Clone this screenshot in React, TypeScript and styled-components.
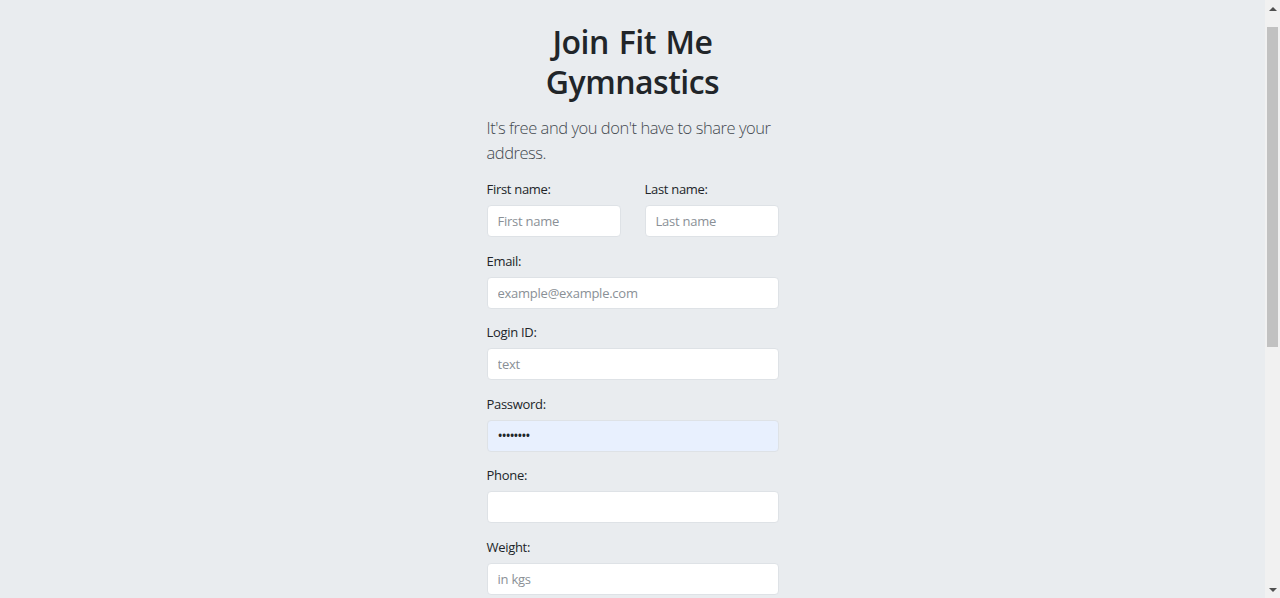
import React from 'react';
import styled, { createGlobalStyle } from 'styled-components';

const GlobalStyle = createGlobalStyle`
  * { box-sizing: border-box; }
  body {
    margin: 0;
    background: #e9ecef;
    color: #212529;
    font-family: "Open Sans", "Noto Sans", sans-serif;
  }
`;

const Page = styled.div`
  display: flex;
  justify-content: center;
  padding: 22px 15px 60px 0;
`;

const FormWrap = styled.form`
  width: 292px;
  display: flex;
  flex-direction: column;
`;

const Title = styled.h1`
  margin: 0 0 13px;
  font-size: 32px;
  line-height: 40px;
  font-weight: 600;
  text-align: center;
  letter-spacing: -0.5px;
  word-spacing: 2px;
`;

const Lead = styled.p`
  margin: 0 0 14px;
  font-size: 16.5px;
  line-height: 25px;
  font-weight: 300;
  letter-spacing: -0.45px;
  color: #444a50;
`;

const Row = styled.div`
  display: grid;
  grid-template-columns: minmax(0, 1fr) minmax(0, 1fr);
  column-gap: 24px;
`;

const Group = styled.div`
  display: flex;
  flex-direction: column;
  min-width: 0;
  margin-bottom: 13.5px;
`;

const Label = styled.label`
  font-size: 13px;
  line-height: 21px;
  letter-spacing: -0.3px;
  margin-bottom: 5px;
  color: #212529;
`;

const Input = styled.input<{ $filled?: boolean }>`
  width: 100%;
  min-width: 0;
  height: 32px;
  padding: 0 10px;
  font-family: inherit;
  font-size: 13px;
  letter-spacing: -0.25px;
  color: #212529;
  background: ${(p) => (p.$filled ? '#e8f0fe' : '#fff')};
  border: 1px solid #dee2e6;
  border-radius: 4px;
  outline: none;
  &[type='password'] {
    font-size: 14px;
    letter-spacing: -1.3px;
  }
  &::placeholder {
    color: #8a9096;
  }
`;

const Select = styled.select`
  height: 32px;
  padding: 0 10px;
  font-family: inherit;
  font-size: 13px;
  background: #fff;
  border: 1px solid #dee2e6;
  border-radius: 4px;
`;

const Submit = styled.button`
  margin-top: 8px;
  height: 38px;
  font-family: inherit;
  font-size: 15px;
  color: #fff;
  background: #0d6efd;
  border: none;
  border-radius: 4px;
`;

/* browser scrollbar, drawn because the headless page hides the native one */
const ScrollBar = styled.div`
  position: fixed;
  top: 0;
  right: 0;
  width: 15px;
  height: 100vh;
  background: #f1f1f1;
  display: flex;
  flex-direction: column;
  align-items: center;
`;

const Arrow = styled.div<{ $down?: boolean }>`
  height: 17px;
  width: 100%;
  display: flex;
  align-items: center;
  justify-content: center;
  &::before {
    content: '';
    border-left: 4px solid transparent;
    border-right: 4px solid transparent;
    ${(p) => (p.$down ? 'border-top: 4px solid #505050;' : 'border-bottom: 4px solid #505050;')}
  }
`;

const Thumb = styled.div`
  width: 11px;
  height: 320px;
  margin-top: 10px;
  background: #c1c1c1;
`;

const Track = styled.div`
  flex: 1;
  width: 100%;
  display: flex;
  justify-content: center;
`;

type Field = { label: string; placeholder?: string; type?: string; value?: string };

const fields: Field[] = [
  { label: 'Email:', placeholder: 'example@example.com', type: 'email' },
  { label: 'Login ID:', placeholder: 'text' },
  { label: 'Password:', type: 'password', value: 'password' },
  { label: 'Phone:', type: 'tel' },
  { label: 'Weight:', placeholder: 'in kgs' },
  { label: 'Height:', placeholder: 'in cms' },
  { label: 'Age:', placeholder: 'years' },
];

const App = () => {
  return (
    <>
      <GlobalStyle />
      <Page>
        <FormWrap onSubmit={(e) => e.preventDefault()}>
          <Title>Join Fit Me Gymnastics</Title>
          <Lead>It's free and you don't have to share your address.</Lead>
          <Row>
            <Group>
              <Label>First name:</Label>
              <Input placeholder="First name" />
            </Group>
            <Group>
              <Label>Last name:</Label>
              <Input placeholder="Last name" />
            </Group>
          </Row>
          {fields.map((f) => (
            <Group key={f.label}>
              <Label>{f.label}</Label>
              {f.type === 'password' ? (
                <Input type="password" $filled defaultValue={f.value} />
              ) : (
                <Input type={f.type || 'text'} placeholder={f.placeholder} />
              )}
            </Group>
          ))}
          <Group>
            <Label>Gender:</Label>
            <Select defaultValue="">
              <option value="">Choose...</option>
              <option>Male</option>
              <option>Female</option>
            </Select>
          </Group>
          <Submit type="submit">Sign up</Submit>
        </FormWrap>
      </Page>
      <ScrollBar>
        <Arrow />
        <Track>
          <Thumb />
        </Track>
        <Arrow $down />
      </ScrollBar>
    </>
  );
};

export default App;
